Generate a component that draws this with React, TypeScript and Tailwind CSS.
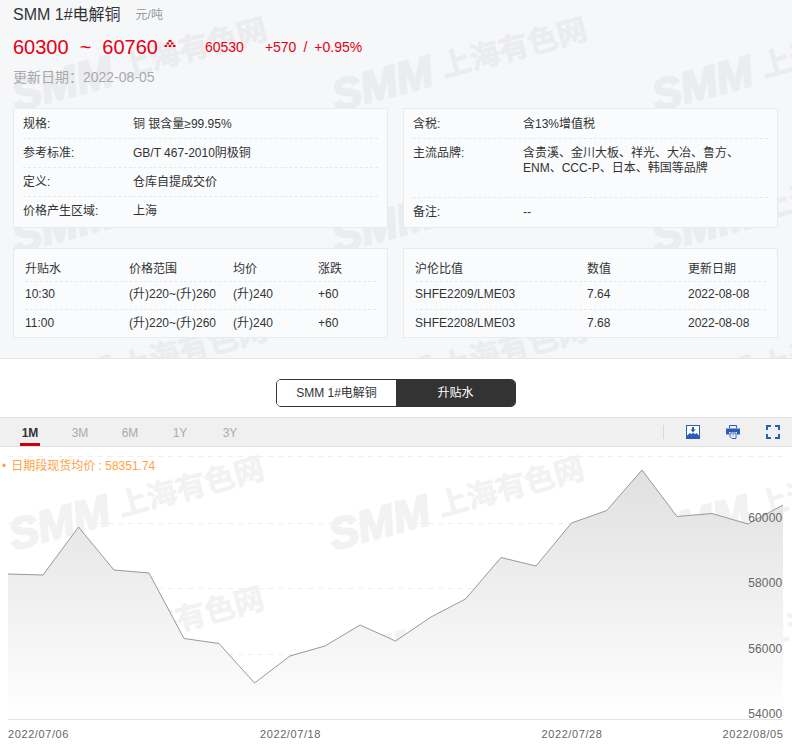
const specLeft = [
  { label: '规格:', value: '铜 银含量≥99.95%', h: 'h-[30px]' },
  { label: '参考标准:', value: 'GB/T 467-2010阴极铜', h: 'h-[29px]' },
  { label: '定义:', value: '仓库自提成交价', h: 'h-[29px]' },
  { label: '价格产生区域:', value: '上海', h: 'h-[29px]' },
]

const premiumRows = [
  ['10:30', '(升)220~(升)260', '(升)240', '+60'],
  ['11:00', '(升)220~(升)260', '(升)240', '+60'],
]

const ratioRows = [
  ['SHFE2209/LME03', '7.64', '2022-08-08'],
  ['SHFE2208/LME03', '7.68', '2022-08-08'],
]

const topMarks = [
  'left-[8px] top-[40px]',
  'left-[328px] top-[40px]',
  'left-[648px] top-[40px]',
  'left-[8px] top-[182px]',
  'left-[328px] top-[182px]',
  'left-[648px] top-[182px]',
  'left-[8px] top-[340px]',
  'left-[328px] top-[340px]',
  'left-[648px] top-[340px]',
]

const chartMarks = [
  'left-[5px] top-[32px]',
  'left-[325px] top-[32px]',
  'left-[645px] top-[32px]',
  'left-[5px] top-[162px]',
  'left-[325px] top-[162px]',
  'left-[645px] top-[162px]',
]

const points =
  '8,574 43,575 78.5,527 114,570 149,573 184,638.5 219,643.5 254.5,683 290,656 325,646 360,625 395.5,641 431,617 465.5,599 501,557.5 536,566 571.5,523 606.7,510.5 642,470 677,516.5 712,513.5 748,524 783,505'

function Watermark({ pos, color }: { pos: string; color: string }) {
  return (
    <div className={`absolute ${pos} flex h-[44px] w-[270px] -rotate-15 items-center gap-[10px] whitespace-nowrap font-bold ${color}`}>
      <span className="text-[44px] italic leading-none [-webkit-text-stroke:2px_currentColor]">SMM</span>
      <span className="text-[30px] leading-none [-webkit-text-stroke:0.5px_currentColor]">上海有色网</span>
    </div>
  )
}

function UpMark() {
  return (
    <svg width="12" height="8" viewBox="0 0 12 8" className="ml-[6px] mt-[-6px]" fill="#e60012">
      <rect x="4.5" y="0" width="3" height="2" />
      <rect x="2.5" y="2.5" width="2.5" height="2" />
      <rect x="7" y="2.5" width="2.5" height="2" />
      <rect x="0.5" y="5" width="2.5" height="2" />
      <rect x="4.7" y="5" width="2.6" height="2" />
      <rect x="9" y="5" width="2.5" height="2" />
    </svg>
  )
}

function Card({ children, className = '' }: { children: React.ReactNode; className?: string }) {
  return <div className={`relative w-[375px] border border-[#e8eaec] bg-[#fafbfc] ${className}`}>{children}</div>
}

function SpecRow({ label, value, h, last }: { label: string; value: string; h: string; last?: boolean }) {
  return (
    <div className={`flex items-center ${h} ${last ? 'pb-[2px]' : 'border-b border-dashed border-[#e8e8e8]'}`}>
      <span className="w-[110px] shrink-0">{label}</span>
      <span>{value}</span>
    </div>
  )
}

export default function App() {
  return (
    <div className="h-[754px] w-[792px] overflow-hidden bg-white font-['Liberation_Sans','Noto_Sans_CJK_SC',sans-serif] text-[12px] text-[#333]">
      {/* 价格信息 */}
      <section className="relative overflow-hidden border-b border-[#e6e6e6] bg-[#f6f7f9] pb-[20px] pl-[13px]">
        {topMarks.map(p => (
          <Watermark key={p} pos={p} color="text-[#ebecee]" />
        ))}
        <div className="relative flex h-[30px] items-center">
          <span className="text-[16px]">SMM 1#电解铜</span>
          <span className="ml-[15px] text-[#999]">元/吨</span>
        </div>
        <div className="relative flex h-[34px] items-center text-[#e60012]">
          <span className="text-[20px]">60300</span>
          <span className="mx-[11px] text-[20px]">~</span>
          <span className="text-[20px]">60760</span>
          <UpMark />
          <span className="ml-[29px] text-[14px]">60530</span>
          <span className="ml-[21px] text-[14px]">+570</span>
          <span className="ml-[7px] text-[14px]">/</span>
          <span className="ml-[7px] text-[14px]">+0.95%</span>
        </div>
        <div className="relative flex h-[26px] items-center text-[14px] text-[#aaa]">更新日期：2022-08-05</div>

        <div className="relative mt-[18px] flex gap-[15px]">
          <Card className="px-[9px]">
            {specLeft.map((r, i) => (
              <SpecRow key={r.label} {...r} last={i === specLeft.length - 1} />
            ))}
          </Card>
          <Card className="px-[9px]">
            <SpecRow label="含税:" value="含13%增值税" h="h-[30px]" />
            <div className="flex h-[59px] border-b border-dashed border-[#e8e8e8] pt-[7px] leading-[15px]">
              <span className="w-[110px] shrink-0">主流品牌:</span>
              <span className="w-[220px]">含贵溪、金川大板、祥光、大冶、鲁方、ENM、CCC-P、日本、韩国等品牌</span>
            </div>
            <SpecRow label="备注:" value="--" h="h-[29px]" last />
          </Card>
        </div>

        <div className="relative mt-[20px] flex gap-[15px]">
          <Card className="h-[90px] px-[11px]">
            <div className="grid h-[33px] grid-cols-[104px_104px_85px_1fr] items-center border-b border-dashed border-[#e8e8e8] pt-[8px]">
              <span>升贴水</span>
              <span>价格范围</span>
              <span>均价</span>
              <span>涨跌</span>
            </div>
            {premiumRows.map((r, i) => (
              <div
                key={r[0]}
                className={`grid grid-cols-[104px_104px_85px_1fr] items-center ${i === 0 ? 'h-[28px] border-b border-dashed border-[#e8e8e8] pb-[4px]' : 'h-[27px] pb-[2px]'}`}
              >
                {r.map((c, j) => (
                  <span key={j}>{c}</span>
                ))}
              </div>
            ))}
          </Card>
          <Card className="h-[90px] px-[11px]">
            <div className="grid h-[33px] grid-cols-[172px_101px_1fr] items-center border-b border-dashed border-[#e8e8e8] pt-[8px]">
              <span>沪伦比值</span>
              <span>数值</span>
              <span>更新日期</span>
            </div>
            {ratioRows.map((r, i) => (
              <div
                key={r[0]}
                className={`grid grid-cols-[172px_101px_1fr] items-center ${i === 0 ? 'h-[28px] border-b border-dashed border-[#e8e8e8] pb-[4px]' : 'h-[27px] pb-[2px]'}`}
              >
                {r.map((c, j) => (
                  <span key={j}>{c}</span>
                ))}
              </div>
            ))}
          </Card>
        </div>
      </section>

      {/* 切换 */}
      <div className="flex justify-center pb-[10px] pt-[20px]">
        <div className="flex h-[28px] w-[240px] overflow-hidden rounded-[5px] border border-[#333]">
          <div className="flex flex-1 items-center justify-center bg-white">SMM 1#电解铜</div>
          <div className="flex flex-1 items-center justify-center bg-[#333] text-white">升贴水</div>
        </div>
      </div>

      {/* 工具栏 */}
      <div className="flex h-[30px] items-center border-y border-[#e0e0e0] bg-[#f0f0f0] pl-[5px] pr-[12px]">
        <div className="relative flex h-full w-[50px] items-center justify-center pt-[2px] font-bold text-[#333]">
          1M
          <div className="absolute bottom-0 h-[3px] w-[20px] bg-[#c8000a]" />
        </div>
        {['3M', '6M', '1Y', '3Y'].map(t => (
          <div key={t} className="flex h-full w-[50px] items-center justify-center pt-[2px] text-[#aaa]">
            {t}
          </div>
        ))}
        <div className="ml-auto flex items-center">
          <div className="mr-[22px] h-[14px] w-px bg-[#d8d8d8]" />
          <svg width="14" height="14" viewBox="0 0 14 14" className="mr-[26px]">
            <rect x="0.5" y="0.5" width="13" height="13" fill="#fff" stroke="#2b5db8" />
            <path d="M1 13V10.5L4 8L5.5 9.2L7 7.5L9 9.2L10.5 8L13 10.5V13Z" fill="#2b5db8" />
            <path d="M6 2H8V4.5H9.8L7 7.2L4.2 4.5H6Z" fill="#2b5db8" />
          </svg>
          <svg width="14" height="14" viewBox="0 0 14 14" className="mr-[26px]">
            <path d="M3.5 3V0.5H10.5V3" fill="none" stroke="#2b5db8" />
            <path d="M0 3.5H14V9.5H11V7H3V9.5H0Z" fill="#2b5db8" />
            <path d="M4 8H10V13.5H6L4 11.5Z" fill="#fff" stroke="#2b5db8" />
            <path d="M5.5 9.5H8.5M5.5 11H8.5" stroke="#9db4e0" />
          </svg>
          <svg width="14" height="14" viewBox="0 0 14 14" fill="none" stroke="#2b5db8" strokeWidth="2">
            <path d="M1 5V1H5M9 1H13V5M13 9V13H9M5 13H1V9" />
          </svg>
        </div>
      </div>

      {/* 走势图 */}
      <div className="relative h-[307px] overflow-hidden">
        {chartMarks.map(p => (
          <Watermark key={p} pos={p} color="text-[#f2f2f2]" />
        ))}
        <svg width="792" height="307" viewBox="0 447 792 307" className="relative block">
          <defs>
            <linearGradient id="area" gradientUnits="userSpaceOnUse" x1="0" y1="470" x2="0" y2="719">
              <stop offset="0" stopColor="#e0e0e0" />
              <stop offset="1" stopColor="#ffffff" />
            </linearGradient>
          </defs>
          {[456, 523, 588, 654].map(y => (
            <line key={y} x1="8" x2="783" y1={y + 0.5} y2={y + 0.5} stroke="#eeeeee" strokeDasharray="5 5" />
          ))}
          <polygon points={`8,719 ${points} 783,719`} fill="url(#area)" />
          <polyline points={points} fill="none" stroke="#999999" strokeWidth="1" />
          <line x1="8" x2="783" y1="719.5" y2="719.5" stroke="#e6e6e6" />
          <g fill="#666666" fontSize="12" textAnchor="end" letterSpacing="0.2">
            <text x="782.5" y="522">60000</text>
            <text x="782.5" y="587">58000</text>
            <text x="782.5" y="653">56000</text>
            <text x="782.5" y="718">54000</text>
          </g>
          <g fill="#666666" fontSize="11" letterSpacing="0.6">
            <text x="8" y="738">2022/07/06</text>
            <text x="260" y="738">2022/07/18</text>
            <text x="541.5" y="738">2022/07/28</text>
            <text x="722.5" y="738">2022/08/05</text>
          </g>
        </svg>
        <div className="absolute left-[2px] top-[10px] text-[#ffa245]">
          <span className="mr-[5px]">•</span>日期段现货均价 : 58351.74
        </div>
      </div>
    </div>
  )
}
